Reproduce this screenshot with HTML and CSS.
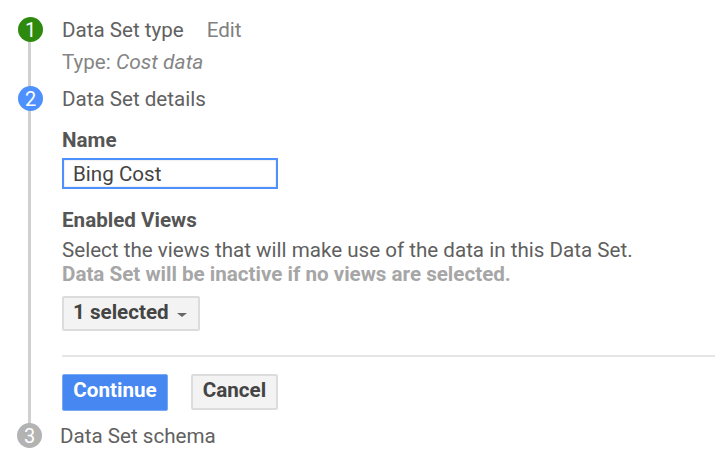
FILE: index.html
```html
<!DOCTYPE html>
<html lang="en">
<head>
    <meta charset="UTF-8">
    <title>Data Set</title>
    <link rel="stylesheet" href="styles.css">
</head>
<body>
    <div class="wizard">
        <div class="rail"></div>

        <div class="step step-one">
            <span class="badge badge-done">1</span>
            <span class="step-title">Data Set type</span>
            <a class="edit">Edit</a>
        </div>
        <p class="summary">Type: <em>Cost data</em></p>

        <div class="step step-two">
            <span class="badge badge-active">2</span>
            <span class="step-title">Data Set details</span>
        </div>

        <div class="details">
            <label class="field-label">Name</label>
            <input class="name-input" type="text" value="Bing Cost">

            <h3 class="field-label views-label">Enabled Views</h3>
            <p class="help">Select the views that will make use of the data in this Data Set.</p>
            <p class="warning">Data Set will be inactive if no views are selected.</p>

            <button class="btn dropdown">1 selected <span class="caret"></span></button>

            <hr class="divider">

            <div class="actions">
                <button class="btn btn-primary">Continue</button>
                <button class="btn btn-cancel">Cancel</button>
            </div>
        </div>

        <div class="step step-three">
            <span class="badge badge-todo">3</span>
            <span class="step-title">Data Set schema</span>
        </div>
    </div>
</body>
</html>
```

FILE: styles.css
```css
* {
    box-sizing: border-box;
}
body {
    margin: 0;
    background: #fff;
    font-family: Roboto, "Liberation Sans", sans-serif;
    color: #5f5f5f;
    overflow: hidden;
}
.wizard {
    position: relative;
    width: 715px;
    height: 460px;
    padding: 17px 0 0 18px;
}
.rail {
    position: absolute;
    left: 28px;
    top: 30px;
    width: 3px;
    height: 398px;
    background: #d0d0d0;
}
.step {
    position: relative;
    display: flex;
    align-items: center;
    height: 25px;
    font-size: 20.6px;
}
.badge {
    display: flex;
    align-items: center;
    justify-content: center;
    width: 25px;
    height: 25px;
    border-radius: 50%;
    margin-right: 19px;
    color: #fff;
    font-size: 20px;
    flex: none;
}
.badge-done {
    background: #2d8a0e;
}
.badge-active {
    background: #4d90fe;
}
.badge-todo {
    background: #b3b3b3;
}
.step-title {
    color: #616161;
}
.edit {
    margin-left: 23px;
    color: #808080;
}
.summary {
    margin: 8px 0 0 44px;
    font-size: 20.6px;
    line-height: 25px;
    color: #858585;
}
.summary em {
    font-size: 21px;
}
.step-two {
    margin-top: 11px;
}
.details {
    margin: 17px 0 0 44px;
}
.field-label {
    display: block;
    margin: 0;
    font-size: 20.6px;
    line-height: 25px;
    font-weight: 700;
    color: #555;
}
.name-input {
    display: block;
    width: 216px;
    height: 31px;
    margin-top: 5px;
    padding: 0 9px;
    border: 2px solid #4d90fe;
    box-shadow: inset 0 0 2px rgba(0, 0, 0, 0.2);
    font-family: inherit;
    font-size: 20.6px;
    color: #444;
    outline: none;
}
.views-label {
    margin-top: 19px;
}
.help {
    margin: 5px 0 0;
    font-size: 20.6px;
    line-height: 24px;
    color: #5f5f5f;
}
.warning {
    margin: 1px 0 0;
    font-size: 20.6px;
    line-height: 22px;
    font-weight: 700;
    color: #a6a6a6;
}
.btn {
    height: 36px;
    border: 2px solid #dcdcdc;
    border-radius: 2px;
    background: #f3f3f3;
    font-family: inherit;
    font-size: 20.6px;
    font-weight: 700;
    color: #444;
    padding: 0;
}
.dropdown {
    display: flex;
    align-items: center;
    width: 138px;
    height: 35px;
    margin-top: 11px;
    padding-left: 9px;
    padding-bottom: 3px;
}
.caret {
    width: 0;
    height: 0;
    margin-left: 8px;
    margin-top: 5px;
    border-left: 5px solid transparent;
    border-right: 5px solid transparent;
    border-top: 4px solid #666;
}
.divider {
    height: 2px;
    margin: 24px 0 0;
    border: 0;
    background: #e5e5e5;
}
.actions {
    display: flex;
    gap: 23px;
    margin-top: 17px;
}
.btn-primary {
    width: 106px;
    height: 37px;
    border: 1px solid #78a9f5;
    background: #4687f1;
    color: #fff;
    padding-bottom: 5px;
}
.btn-cancel {
    width: 87px;
    padding-bottom: 5px;
}
.step-three {
    margin: 12px 0 0 -1px;
}
.step-three .badge {
    margin-right: 18px;
}
```
